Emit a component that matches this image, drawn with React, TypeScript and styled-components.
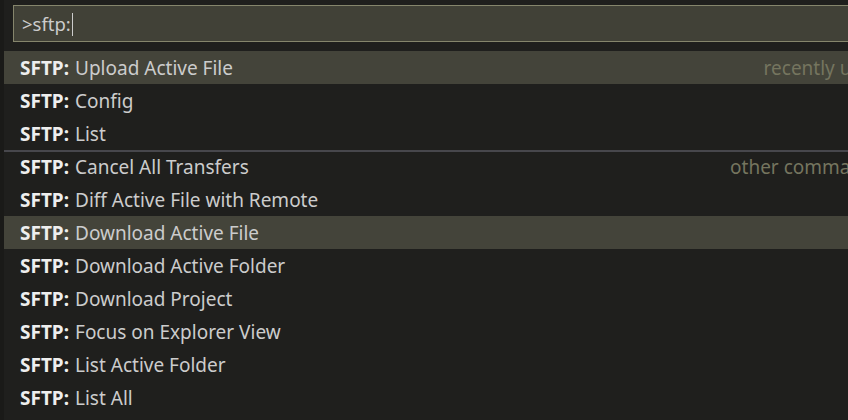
import { FC } from 'react'
import styled, { createGlobalStyle } from 'styled-components'

const GlobalStyle = createGlobalStyle`
  html, body {
    margin: 0;
    padding: 0;
    background: #1a1a18;
    overflow: hidden;
  }
  body {
    font-family: 'Noto Sans', 'Open Sans', sans-serif;
  }
`

interface ICommand {
  label: string
  detail?: string
  separator?: boolean
  active?: boolean
}

const commands: ICommand[] = [
  { label: 'Upload Active File', detail: 'recently used', active: true },
  { label: 'Config' },
  { label: 'List' },
  { label: 'Cancel All Transfers', detail: 'other commands', separator: true },
  { label: 'Diff Active File with Remote' },
  { label: 'Download Active File', active: true },
  { label: 'Download Active Folder' },
  { label: 'Download Project' },
  { label: 'Focus on Explorer View' },
  { label: 'List Active Folder' },
  { label: 'List All' },
]

const App: FC = () => {
  return (
    <>
      <GlobalStyle />
      <Page>
        <Widget>
          <InputBox>
            <InputText>&gt;sftp:</InputText>
            <Caret />
          </InputBox>
          <List>
            {commands.map((cmd) => (
              <Row key={cmd.label} $active={cmd.active} $separator={cmd.separator}>
                <Prefix>SFTP:</Prefix>
                <Label>{cmd.label}</Label>
                {cmd.detail && <Detail>{cmd.detail}</Detail>}
              </Row>
            ))}
          </List>
        </Widget>
      </Page>
    </>
  )
}

export default App

const Page = styled.div`
  width: 848px;
  height: 420px;
  overflow: hidden;
  padding-left: 4px;
  box-sizing: border-box;
`
const Widget = styled.div`
  width: 890px;
  height: 420px;
  background: #1f1f1d;
  padding-top: 5px;
  box-sizing: border-box;
`
const InputBox = styled.div`
  margin-left: 9px;
  height: 37px;
  box-sizing: border-box;
  border: 1px solid #85856c;
  background: #414137;
  display: flex;
  align-items: center;
  padding: 2px 0 0 8px;
  margin-bottom: 9px;
`
const InputText = styled.span`
  color: #cccccc;
  font-size: 18.5px;
  line-height: 1;
`
const Caret = styled.span`
  width: 1px;
  height: 23px;
  background: #cccccc;
  margin-left: 1px;
`
const List = styled.div`
  display: flex;
  flex-direction: column;
`
const Row = styled.div<{ $active?: boolean; $separator?: boolean }>`
  height: 33px;
  box-sizing: border-box;
  display: flex;
  align-items: center;
  padding: 1px 11px 0 16px;
  background: ${(p) => (p.$active ? '#44443a' : 'transparent')};
  border-top: ${(p) => (p.$separator ? '2px solid #47474c' : 'none')};
  padding-bottom: ${(p) => (p.$separator ? '2px' : '0')};
  color: #cccccc;
  font-size: 19px;
  white-space: nowrap;
`
const Prefix = styled.span`
  font-weight: 700;
  color: #eeeeee;
  margin-right: 6px;
`
const Label = styled.span``
const Detail = styled.span`
  margin-left: auto;
  color: #75755f;
`
